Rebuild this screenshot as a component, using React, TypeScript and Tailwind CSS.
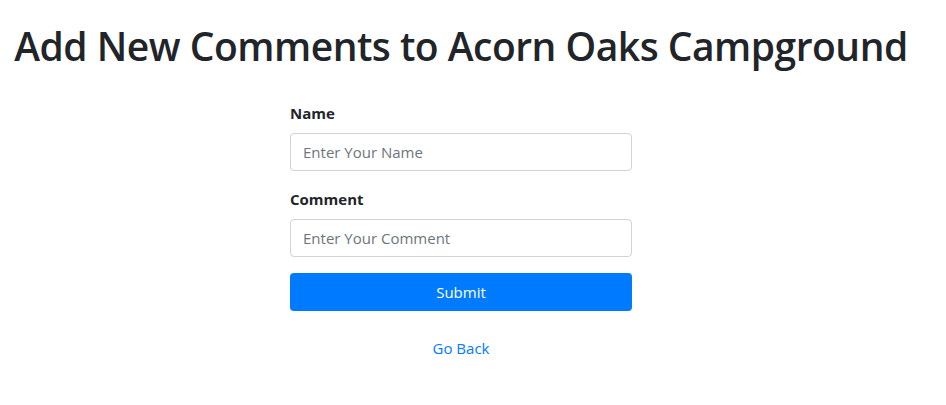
export default function App() {
  return (
    <div className="min-h-screen w-[922px] bg-white text-[#212529] [font-family:'Open_Sans',sans-serif]">
      <h1 className="pt-[22px] mb-[31px] text-center text-[39px] font-semibold leading-[48px] tracking-[-0.5px]">
        Add New Comments to Acorn Oaks Campground
      </h1>
      <form className="mx-auto w-[342px]" onSubmit={(e) => e.preventDefault()}>
        <div className="mb-4">
          <label className="mb-2 block text-[15px] font-bold leading-6">Name</label>
          <input
            type="text"
            placeholder="Enter Your Name"
            className="block h-[38px] w-full rounded-[4px] border border-[#ced4da] px-3 text-[15px] leading-6 text-[#495057] outline-none placeholder:text-[#6c757d]"
          />
        </div>
        <div className="mb-4">
          <label className="mb-2 block text-[15px] font-bold leading-6">Comment</label>
          <input
            type="text"
            placeholder="Enter Your Comment"
            className="block h-[38px] w-full rounded-[4px] border border-[#ced4da] px-3 text-[15px] leading-6 text-[#495057] outline-none placeholder:text-[#6c757d]"
          />
        </div>
        <button
          type="submit"
          className="block h-[38px] w-full rounded-[4px] bg-[#007bff] text-[15px] leading-6 text-white"
        >
          Submit
        </button>
      </form>
      <div className="mt-[25px] text-center">
        <a href="#" className="text-[15px] leading-6 text-[#007bff]">
          Go Back
        </a>
      </div>
    </div>
  );
}
